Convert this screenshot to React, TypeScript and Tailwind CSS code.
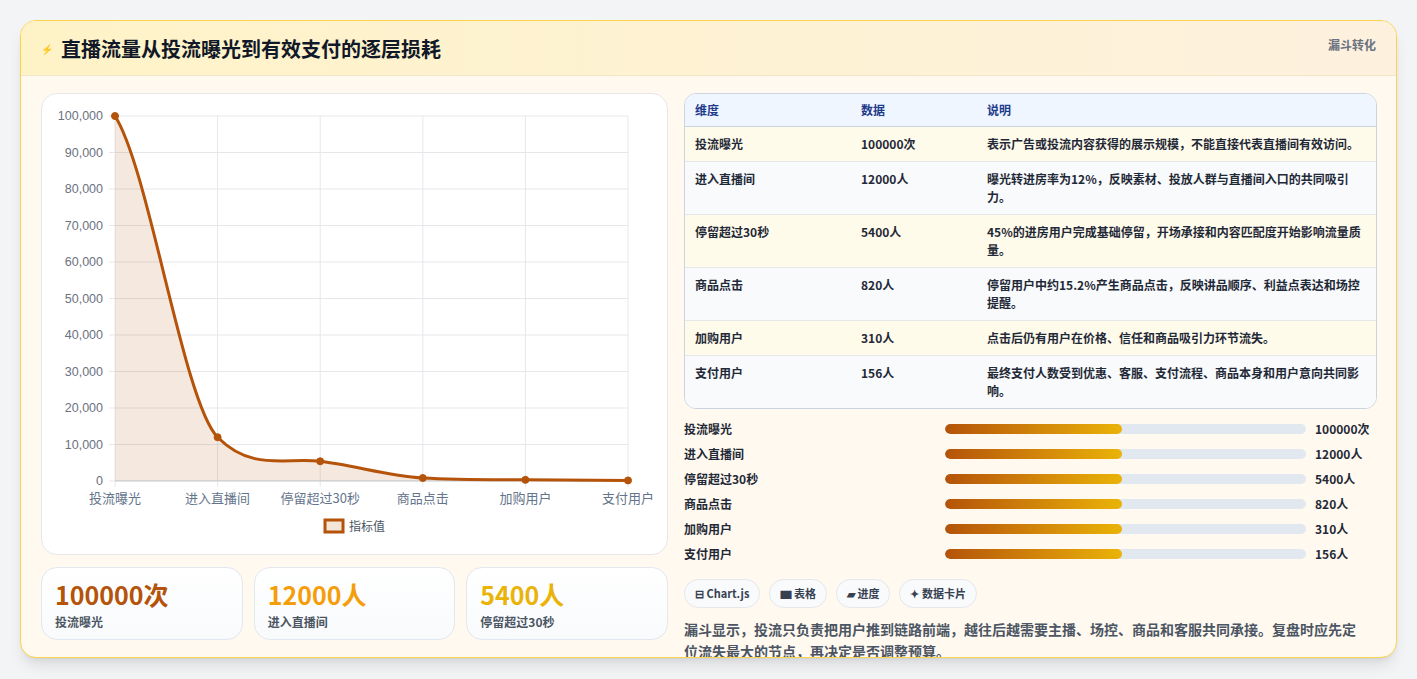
import React from "react";

const cats = ["投流曝光", "进入直播间", "停留超过30秒", "商品点击", "加购用户", "支付用户"];
const vals = [100000, 12000, 5400, 820, 310, 156];
const units = ["100000次", "12000人", "5400人", "820人", "310人", "156人"];
const rows = [
  ["投流曝光", "100000次", "表示广告或投流内容获得的展示规模，不能直接代表直播间有效访问。"],
  ["进入直播间", "12000人", "曝光转进房率为12%，反映素材、投放人群与直播间入口的共同吸引力。"],
  ["停留超过30秒", "5400人", "45%的进房用户完成基础停留，开场承接和内容匹配度开始影响流量质量。"],
  ["商品点击", "820人", "停留用户中约15.2%产生商品点击，反映讲品顺序、利益点表达和场控提醒。"],
  ["加购用户", "310人", "点击后仍有用户在价格、信任和商品吸引力环节流失。"],
  ["支付用户", "156人", "最终支付人数受到优惠、客服、支付流程、商品本身和用户意向共同影响。"],
];

function Chart() {
  const X0 = 73, W = 513, Y0 = 22, H = 365;
  const xs = cats.map((_, i) => X0 + (W / 5) * i);
  const ys = vals.map((v) => Y0 + H - (v / 100000) * H);
  let d = `M${xs[0]},${ys[0]}`;
  for (let i = 0; i < 5; i++) {
    const dx = (xs[i + 1] - xs[i]) / 3;
    const s0 = i === 0 ? (ys[1] - ys[0]) / (xs[1] - xs[0]) : (ys[i + 1] - ys[i - 1]) / (xs[i + 1] - xs[i - 1]);
    const s1 = i === 4 ? (ys[5] - ys[4]) / (xs[5] - xs[4]) : (ys[i + 2] - ys[i]) / (xs[i + 2] - xs[i]);
    const c0 = i === 0 ? s0 * 0.5 : s0 * 0.6;
    d += ` C${xs[i] + dx},${ys[i] + c0 * dx} ${xs[i + 1] - dx},${ys[i + 1] - s1 * 0.6 * dx} ${xs[i + 1]},${ys[i + 1]}`;
  }
  const area = d + ` L${xs[5]},${Y0 + H} L${xs[0]},${Y0 + H} Z`;
  const ticks = Array.from({ length: 11 }, (_, i) => i * 10000);
  return (
    <svg width="627" height="461" className="block">
      {ticks.map((t) => {
        const y = Y0 + H - (t / 100000) * H;
        return (
          <g key={t}>
            <line x1={X0 - 6} x2={X0 + W} y1={y} y2={y} stroke="#e5e7eb" />
            <text x={X0 - 12} y={y + 4} textAnchor="end" fontSize="12.5" fill="#6b7280" fontFamily="Liberation Sans, sans-serif">
              {t.toLocaleString("en-US")}
            </text>
          </g>
        );
      })}
      {xs.map((x, i) => (
        <g key={i}>
          <line x1={x} x2={x} y1={Y0} y2={Y0 + H + 6} stroke="#e5e7eb" />
          <text x={x} y={Y0 + H + 22} textAnchor="middle" fontSize="13" fill="#64748b" fontFamily="Noto Sans CJK SC, sans-serif">
            {cats[i]}
          </text>
        </g>
      ))}
      <line x1={X0} x2={X0 + W} y1={Y0 + H} y2={Y0 + H} stroke="#cbd5e1" />
      <path d={area} fill="#b45309" fillOpacity="0.13" />
      <path d={d} fill="none" stroke="#b45309" strokeWidth="3" />
      {xs.map((x, i) => (
        <circle key={i} cx={x} cy={ys[i]} r="3.5" fill="#b45309" stroke="#b45309" strokeWidth="1" />
      ))}
      <rect x="283" y="426" width="18" height="12" fill="#f3e5d8" stroke="#b45309" strokeWidth="3" />
      <text x="307" y="437" fontSize="12" fill="#4b5563" fontFamily="Noto Sans CJK SC, sans-serif">指标值</text>
    </svg>
  );
}

export default function App() {
  return (
    <div className="w-[1417px] h-[679px] bg-[#f3f4f6] pt-5 pl-5" style={{ fontFamily: "'Noto Sans CJK SC', sans-serif" }}>
      <div className="w-[1377px] h-[638px] rounded-2xl border border-[#fcd34d] bg-[#fff9ef] overflow-hidden shadow-lg flex flex-col">
        <div className="h-[55px] shrink-0 bg-gradient-to-r from-[#fef3c7] to-[#fdf1de] border-b border-[#f3e6c8] flex items-start justify-between pl-5 pr-5">
          <div className="flex items-center gap-2 h-[55px]">
            <span className="text-[10px] text-[#3b82f6]">⚡</span>
            <span className="text-[20px] font-bold text-[#111827]">直播流量从投流曝光到有效支付的逐层损耗</span>
          </div>
          <span className="text-xs font-bold text-[#6b7280] mt-4">漏斗转化</span>
        </div>
        <div className="flex gap-4 pl-5 pr-[19px] pt-[17px]">
          <div className="w-[627px] flex flex-col gap-3">
            <div className="h-[462px] bg-white rounded-2xl border border-[#e5e7eb]">
              <Chart />
            </div>
            <div className="grid grid-cols-3 gap-[11px]">
              {[
                ["100000次", "投流曝光", "text-[#b45309]"],
                ["12000人", "进入直播间", "text-[#f59e0b]"],
                ["5400人", "停留超过30秒", "text-[#eab308]"],
              ].map(([v, l, c]) => (
                <div key={l} className="h-[73px] rounded-2xl border border-[#e2e8f0] bg-gradient-to-b from-white to-[#f8fafc] pl-[13px] pt-[9px]">
                  <div className={`text-[25px] font-bold leading-[34px] ${c}`}>{v}</div>
                  <div className="text-[12px] font-bold text-[#4b5563] mt-[2px]">{l}</div>
                </div>
              ))}
            </div>
          </div>
          <div className="flex-1 flex flex-col">
            <div className="rounded-xl border border-[#cbd5e1] overflow-hidden text-[12px] font-bold text-[#1f2937]">
              <div className="flex h-[33px] items-center bg-[#eff6ff] text-[#1e3a8a] border-b border-[#cbd5e1]">
                <div className="w-[176px] pl-[10px]">维度</div>
                <div className="w-[126px]">数据</div>
                <div className="flex-1">说明</div>
              </div>
              {rows.map((r, i) => (
                <div key={i} className={`flex py-[8px] leading-[18px] border-b border-[#e5e7eb] last:border-b-0 ${i % 2 === 0 ? "bg-[#fffbeb]" : "bg-[#f8fafc]"}`}>
                  <div className="w-[176px] pl-[10px]">{r[0]}</div>
                  <div className="w-[126px]">{r[1]}</div>
                  <div className="flex-1 pr-[12px]">{r[2]}</div>
                </div>
              ))}
            </div>
            <div className="flex flex-col gap-[9px] mt-3">
              {cats.map((c, i) => (
                <div key={c} className="flex items-center h-[16px] text-[12px] font-bold text-[#1f2937]">
                  <div className="w-[261px]">{c}</div>
                  <div className="w-[361px] h-[10px] rounded-full bg-[#e2e8f0] overflow-hidden">
                    <div className="h-full w-[49%] rounded-full bg-gradient-to-r from-[#b45309] to-[#eab308]" />
                  </div>
                  <div className="pl-[9px]">{units[i]}</div>
                </div>
              ))}
            </div>
            <div className="flex gap-[9px] mt-[17px]">
              {["⊟ Chart.js", "▆ 表格", "▰ 进度", "✦ 数据卡片"].map((t) => (
                <div key={t} className="h-[29px] px-[10px] rounded-full border border-[#e5e7eb] bg-[#f8fafc] flex items-center text-[11px] font-bold text-[#374151]">{t}</div>
              ))}
            </div>
            <p className="mt-[10px] text-[14px] leading-[22px] font-bold text-[#4b5563] pr-[8px]">
              漏斗显示，投流只负责把用户推到链路前端，越往后越需要主播、场控、商品和客服共同承接。复盘时应先定位流失最大的节点，再决定是否调整预算。
            </p>
          </div>
        </div>
      </div>
    </div>
  );
}
